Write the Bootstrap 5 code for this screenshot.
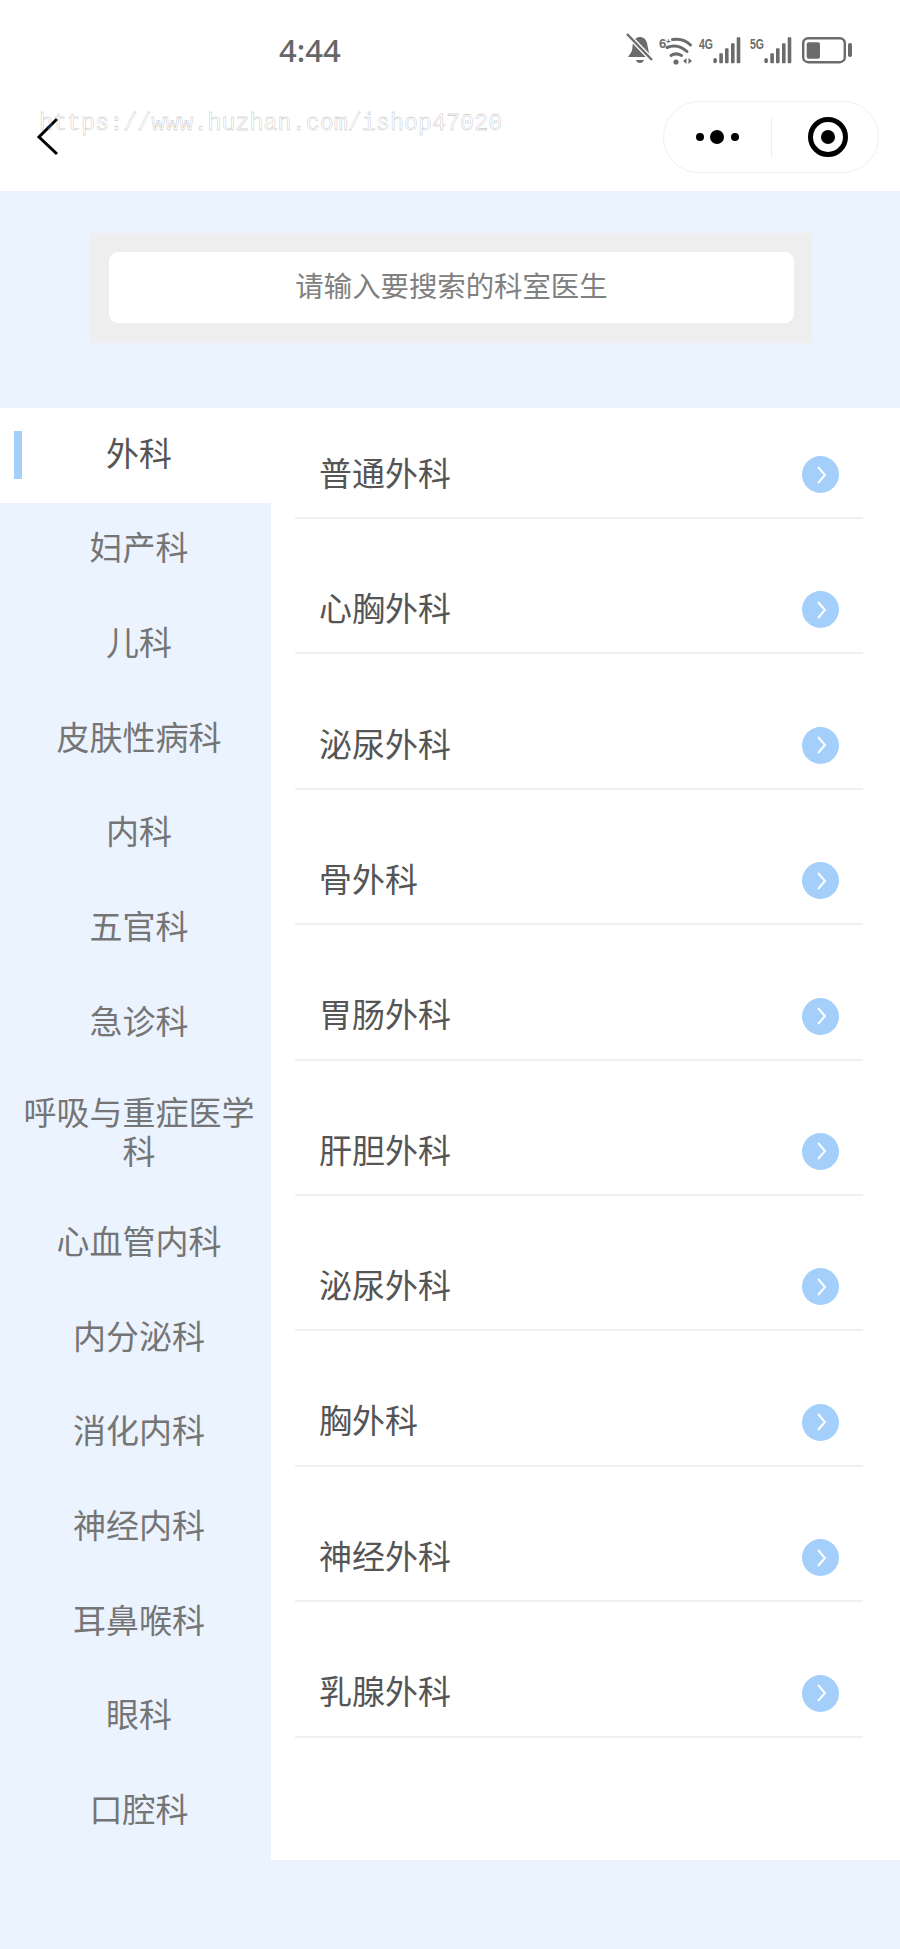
<!DOCTYPE html>
<html lang="zh-CN">
<head>
<meta charset="utf-8">
<title>科室医生</title>
<link rel="stylesheet" href="https://cdn.jsdelivr.net/npm/bootstrap@5.3.0/dist/css/bootstrap.min.css">
<style>
html,body{margin:0;background:#ebf3ff;}
body{font-family:"Noto Sans CJK SC","Noto Sans",sans-serif;width:900px;height:1949px;overflow:hidden;position:relative;}
.top-head{background:#fff;height:191px;}
.stat-row{height:92px;padding:0 0 0 279px;}
.clock{font-family:"Noto Sans",sans-serif;font-weight:500;font-size:31px;color:#666;line-height:1;margin-top:35px;}
.stat-icons{margin:29px 43px 0 auto;}
.nav-row{height:99px;padding:9px 21px 0 0;}
.capsule{width:216px;height:72px;border:1px solid #f0f0f0;border-radius:36px;background:#fff;}
.capsule svg{display:block;}
.back-ico{margin:15px 0 0 36px;}
.watermark{position:absolute;left:39px;top:108px;font-family:"Liberation Mono",monospace;font-size:23.4px;line-height:32px;color:transparent;-webkit-text-stroke:.35px #b4b4b4;white-space:nowrap;}
.search-band{height:217px;padding:42px 88px 0 90px;}
.search-shell{background:#eeeeee;height:110px;padding:19px 18px 20px 19px;}
.search-field{background:#fff;height:71px;border-radius:9px;font-size:28.4px;color:#808080;padding-bottom:4px;}
.dept-wrap{height:1452px;}
.side-col{width:271px;flex:none;}
.side-item{min-height:94.7px;padding:24.5px 14px 24.5px 21px;line-height:38px;font-size:33px;color:#757575;text-align:center;position:relative;}
.side-item.two-line{padding-top:21px;padding-bottom:25.5px;line-height:39.5px;}
.side-item.on{background:#fff;color:#555;}
.side-item.on::before{content:"";position:absolute;left:14px;top:23px;width:8px;height:48px;background:#a3cffa;}
.main-col{background:#fff;padding-left:24px;padding-right:37px;}
.dept-row{height:111px;margin-bottom:24.4px;padding:20px 24px 0 24px;border-bottom:2px solid #f0f0f0;font-size:33px;color:#555;}
.go-dot{width:37px;height:37px;border-radius:50%;background:#a3cffa;margin-top:4px;}
.go-dot svg{display:block;}
</style>
</head>
<body>
<div class="top-head">
  <div class="stat-row d-flex align-items-start">
    <div class="clock">4:44</div>
    <svg class="stat-icons" width="232" height="40" viewBox="0 0 232 40">
      <defs>
        <g id="sig" fill="#6b6b6b">
          <rect x="88.300" y="29" width="3.600" height="5.300" rx="1.800"/>
          <rect x="94.300" y="24.300" width="3.600" height="10" rx=".8"/>
          <rect x="100" y="19.300" width="3.600" height="15" rx=".8"/>
          <rect x="106" y="14.300" width="3.600" height="20" rx=".8"/>
          <rect x="111.700" y="8.300" width="3.600" height="26" rx=".8"/>
        </g>
      </defs>
      <g transform="translate(0 3)">
        <g fill="#6b6b6b">
          <path d="M5 22c3-3 2-7 3-11 1-4 4-6 7-6s6 2 7 6l2 10 3 4H3z"/>
          <path d="M11 28h8c-1 4-7 4-8 0z"/>
        </g>
        <path d="M3 3l25 26" stroke="#fff" stroke-width="5"/>
        <path d="M2 2l25 26" stroke="#6b6b6b" stroke-width="2.400"/>
      </g>
      <text x="34" y="19" font-family="Liberation Sans,sans-serif" font-size="13" font-weight="700" fill="#6b6b6b">6</text>
      <text x="41" y="15" font-family="Liberation Sans,sans-serif" font-size="8" font-weight="700" fill="#6b6b6b">+</text>
      <g fill="none" stroke="#6b6b6b" stroke-width="3" stroke-linecap="round">
        <path d="M47.500 10.500c6-1 13 .5 18 5.500"/>
        <path d="M42 18.500c7-3 14-1.500 20 4"/>
        <path d="M46 26.500c3-2 7-2 10.500 0"/>
      </g>
      <circle cx="51" cy="33" r="2.600" fill="#6b6b6b"/>
      <path d="M61.500 29v6l-3.500-3zM63.500 29v6l3.500-3z" fill="#6b6b6b"/>
      <text x="74" y="20" font-family="Liberation Sans,sans-serif" font-size="14" font-weight="700" fill="#6b6b6b" textLength="14" lengthAdjust="spacingAndGlyphs">4G</text>
      <use href="#sig"/>
      <text x="125" y="20" font-family="Liberation Sans,sans-serif" font-size="14" font-weight="700" fill="#6b6b6b" textLength="14" lengthAdjust="spacingAndGlyphs">5G</text>
      <use href="#sig" x="51"/>
      <rect x="178.200" y="9.200" width="41.600" height="24" rx="5" fill="none" stroke="#6b6b6b" stroke-width="2.400"/>
      <rect x="181.700" y="13.300" width="13.300" height="16.400" rx="2" fill="#6b6b6b"/>
      <rect x="223" y="14" width="4" height="14" rx="1.800" fill="#6b6b6b"/>
    </svg>
  </div>
  <div class="nav-row d-flex align-items-start">
    <svg class="back-ico" width="24" height="44" viewBox="0 0 24 44"><path d="M21 3 3 21l18 17" fill="none" stroke="#000" stroke-width="3"/></svg>
    <div class="capsule d-flex ms-auto">
      <svg width="214" height="70" viewBox="0 0 214 70">
        <circle cx="36" cy="35" r="4" fill="#000"/>
        <circle cx="53" cy="35" r="7" fill="#000"/>
        <circle cx="71" cy="35" r="4" fill="#000"/>
        <path d="M107.500 15v41" stroke="#eee" stroke-width="1"/>
        <circle cx="164" cy="35" r="17.500" fill="none" stroke="#000" stroke-width="5"/>
        <circle cx="164" cy="35" r="7" fill="#000"/>
      </svg>
    </div>
  </div>
</div>
<div class="watermark">https://www.huzhan.com/ishop47020</div>

<div class="search-band">
  <div class="search-shell">
    <div class="search-field d-flex align-items-center justify-content-center">请输入要搜索的科室医生</div>
  </div>
</div>

<div class="dept-wrap d-flex">
  <div class="side-col">
    <div class="side-item on">外科</div>
    <div class="side-item">妇产科</div>
    <div class="side-item">儿科</div>
    <div class="side-item">皮肤性病科</div>
    <div class="side-item">内科</div>
    <div class="side-item">五官科</div>
    <div class="side-item">急诊科</div>
    <div class="side-item two-line">呼吸与重症医学科</div>
    <div class="side-item">心血管内科</div>
    <div class="side-item">内分泌科</div>
    <div class="side-item">消化内科</div>
    <div class="side-item">神经内科</div>
    <div class="side-item">耳鼻喉科</div>
    <div class="side-item">眼科</div>
    <div class="side-item">口腔科</div>
  </div>
  <div class="main-col flex-grow-1">
    <div class="dept-row d-flex align-items-center justify-content-between"><span>普通外科</span><span class="go-dot d-flex align-items-center justify-content-center"><svg width="12" height="22" viewBox="0 0 12 22"><path d="M3 3l7 8-7 8" fill="none" stroke="#fff" stroke-width="2"/></svg></span></div>
    <div class="dept-row d-flex align-items-center justify-content-between"><span>心胸外科</span><span class="go-dot d-flex align-items-center justify-content-center"><svg width="12" height="22" viewBox="0 0 12 22"><path d="M3 3l7 8-7 8" fill="none" stroke="#fff" stroke-width="2"/></svg></span></div>
    <div class="dept-row d-flex align-items-center justify-content-between"><span>泌尿外科</span><span class="go-dot d-flex align-items-center justify-content-center"><svg width="12" height="22" viewBox="0 0 12 22"><path d="M3 3l7 8-7 8" fill="none" stroke="#fff" stroke-width="2"/></svg></span></div>
    <div class="dept-row d-flex align-items-center justify-content-between"><span>骨外科</span><span class="go-dot d-flex align-items-center justify-content-center"><svg width="12" height="22" viewBox="0 0 12 22"><path d="M3 3l7 8-7 8" fill="none" stroke="#fff" stroke-width="2"/></svg></span></div>
    <div class="dept-row d-flex align-items-center justify-content-between"><span>胃肠外科</span><span class="go-dot d-flex align-items-center justify-content-center"><svg width="12" height="22" viewBox="0 0 12 22"><path d="M3 3l7 8-7 8" fill="none" stroke="#fff" stroke-width="2"/></svg></span></div>
    <div class="dept-row d-flex align-items-center justify-content-between"><span>肝胆外科</span><span class="go-dot d-flex align-items-center justify-content-center"><svg width="12" height="22" viewBox="0 0 12 22"><path d="M3 3l7 8-7 8" fill="none" stroke="#fff" stroke-width="2"/></svg></span></div>
    <div class="dept-row d-flex align-items-center justify-content-between"><span>泌尿外科</span><span class="go-dot d-flex align-items-center justify-content-center"><svg width="12" height="22" viewBox="0 0 12 22"><path d="M3 3l7 8-7 8" fill="none" stroke="#fff" stroke-width="2"/></svg></span></div>
    <div class="dept-row d-flex align-items-center justify-content-between"><span>胸外科</span><span class="go-dot d-flex align-items-center justify-content-center"><svg width="12" height="22" viewBox="0 0 12 22"><path d="M3 3l7 8-7 8" fill="none" stroke="#fff" stroke-width="2"/></svg></span></div>
    <div class="dept-row d-flex align-items-center justify-content-between"><span>神经外科</span><span class="go-dot d-flex align-items-center justify-content-center"><svg width="12" height="22" viewBox="0 0 12 22"><path d="M3 3l7 8-7 8" fill="none" stroke="#fff" stroke-width="2"/></svg></span></div>
    <div class="dept-row d-flex align-items-center justify-content-between"><span>乳腺外科</span><span class="go-dot d-flex align-items-center justify-content-center"><svg width="12" height="22" viewBox="0 0 12 22"><path d="M3 3l7 8-7 8" fill="none" stroke="#fff" stroke-width="2"/></svg></span></div>
  </div>
</div>
<script src="https://cdn.jsdelivr.net/npm/bootstrap@5.3.0/dist/js/bootstrap.bundle.min.js"></script>
</body>
</html>
